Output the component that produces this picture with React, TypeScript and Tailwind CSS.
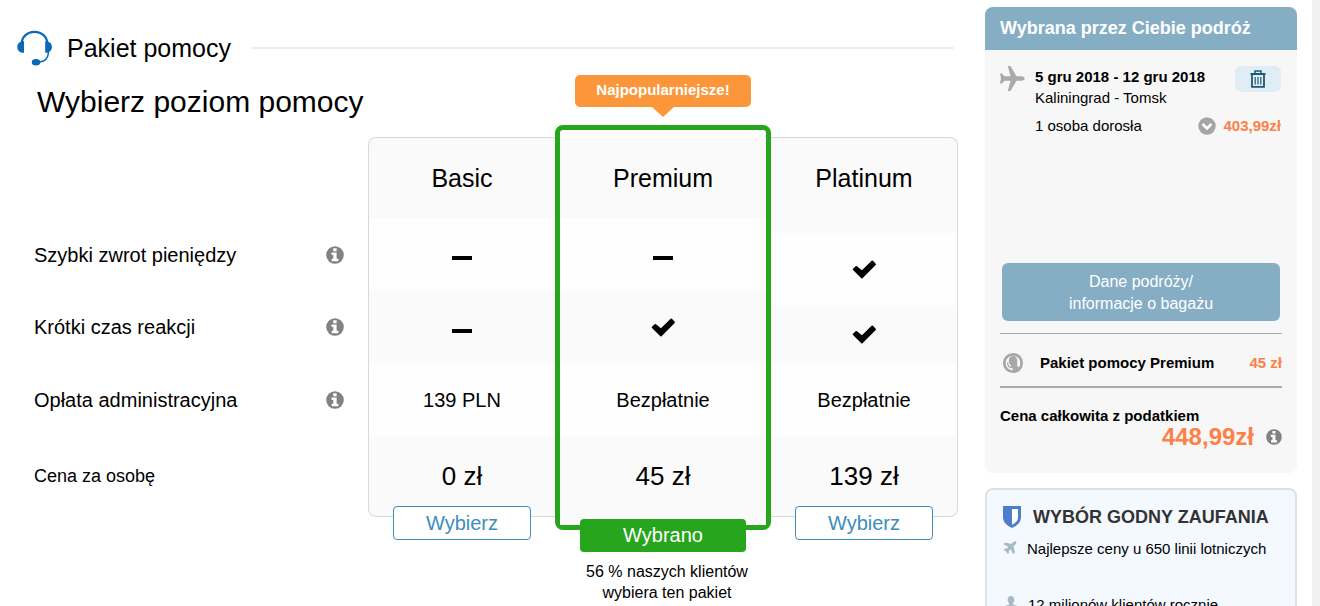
import React from "react";

function HeadsetIcon() {
  return (
    <svg viewBox="0 0 36 36" className="h-9 w-9 shrink-0" aria-hidden="true">
      <path d="M4.5 14C4.8 6.500 10.500 1.900 17.500 1.900S30.200 6.500 30.500 14" fill="none" stroke="#0869b8" strokeWidth="2.200" />
      <path d="M7 11.300v11.500C2.800 22.900.3 20.500.3 17s2.500-5.700 6.700-5.700z" fill="#0869b8" />
      <path d="M28.200 11.300v11.500c4.200.1 6.700-2.300 6.700-5.800s-2.500-5.700-6.700-5.700z" fill="#0869b8" />
      <path d="M31.500 21.500c0 6-3 10.200-10 10.700" fill="none" stroke="#0869b8" strokeWidth="1.500" />
      <ellipse cx="19" cy="32.300" rx="4.200" ry="3.200" fill="#0869b8" />
    </svg>
  );
}

function InfoIcon({ className }: { className: string }) {
  return (
    <svg viewBox="0 0 18 18" className={`block ${className}`} aria-hidden="true">
      <circle cx="9" cy="9" r="8.800" fill="#828282" />
      <path d="M7.200 2.300h3.400v2.900H7.200zM5.500 6.600h5.100v6.100h1.800v2.500H5.700v-2.500h1.600V9H5.500z" fill="#fff" />
    </svg>
  );
}

function PlaneRightIcon() {
  return (
    <svg viewBox="0 0 25 25" className="block h-[25px] w-[25px] shrink-0" aria-hidden="true">
      <path d="M0 7.500h2l2.500 2.800h6L7.800 0h2.700l6 10.300h5c1.800 0 3.200 1.200 3.200 2.200s-1.400 2.200-3.200 2.200h-5l-6 10.300H7.800l2.700-10.300h-6L2 17.500H0l1-5z" fill="#aaa" />
    </svg>
  );
}

function SmallPlaneIcon() {
  return (
    <svg viewBox="0 0 24 24" className="block h-4 w-4 shrink-0 rotate-45" aria-hidden="true">
      <path
        d="M21 16v-2l-8-5V3.500C13 2.670 12.330 2 11.500 2S10 2.670 10 3.500V9l-8 5v2l8-2.500V19l-2 1.500V22l3.500-1 3.500 1v-1.500L13 19v-5.500z"
        fill="#a9bac6"
        stroke="#a9bac6"
        strokeWidth="1.800"
      />
    </svg>
  );
}

function CheckIcon() {
  return (
    <svg viewBox="0 0 24 20" className="mx-auto block h-5 w-6" role="img" aria-label="Tak">
      <path d="M3.600 7.300 1 9.800a1 1 0 0 0 0 1.300l8.300 8.200a1 1 0 0 0 1.200 0L23.700 6a1 1 0 0 0 0-1.300L20.900 1.700a1 1 0 0 0-1.300 0L9.900 11.300 5 7.300a1 1 0 0 0-1.400 0z" fill="#000" />
    </svg>
  );
}

function DashIcon() {
  return (
    <svg viewBox="0 0 20 4" className="mx-auto block h-1 w-5" role="img" aria-label="Nie">
      <path d="M0 0h20v4H0z" fill="#000" />
    </svg>
  );
}

function TrashIcon() {
  return (
    <svg viewBox="0 0 16 18" className="h-[18px] w-4" fill="none" stroke="#1f5878" aria-hidden="true">
      <path d="M0.500 4h15" strokeWidth="2" />
      <path d="M5 3.500V1h6v2.500" strokeWidth="1.500" />
      <path d="M2 4.500V16.800h12V4.500" strokeWidth="1.800" />
      <path d="M5.200 7v7.500M8 7v7.500M10.800 7v7.500" strokeWidth="1.200" />
    </svg>
  );
}

function ChevronBadge() {
  return (
    <svg viewBox="0 0 18 18" className="block h-[18px] w-[18px]" aria-hidden="true">
      <circle cx="9" cy="9" r="8.700" fill="#a5a5a5" />
      <path d="m4.600 7 4.400 4.400L13.400 7" fill="none" stroke="#fff" strokeWidth="2.600" />
    </svg>
  );
}

function AgentIcon() {
  return (
    <svg viewBox="0 0 22 22" className="block h-[22px] w-[22px] shrink-0" aria-hidden="true">
      <circle cx="11" cy="11" r="8.700" fill="#f7f7f7" stroke="#a8a8a8" strokeWidth="2.800" />
      <path d="M6.800 9C6.800 5.500 8.600 4 11 4s4.200 1.500 4.200 5v5l2.300 1.800c-1.600 2.200-3.900 3.400-6.500 3.400v-2.400l-2.200-1.500V13C7.500 12.300 6.800 11 6.800 9z" fill="#a8a8a8" />
      <path d="M5.600 10.500c0 3.500 1.500 5 4.400 5.300" fill="none" stroke="#a8a8a8" strokeWidth="1.200" />
    </svg>
  );
}

function ShieldIcon() {
  return (
    <svg viewBox="0 0 18 22" className="h-[22px] w-[18px] shrink-0" aria-hidden="true">
      <path d="M0 0h18v11c0 5-3.500 8.500-9 11-5.500-2.500-9-6-9-11z" fill="#4e7dcc" />
      <path d="M9 3h6v8c0 3.500-2 5.700-6 7.800z" fill="#fff" />
    </svg>
  );
}

function PersonIcon() {
  return (
    <svg viewBox="0 0 14 18" className="h-[18px] w-3.5 shrink-0" aria-hidden="true">
      <path d="M7 0c2.200 0 3.300 1.600 3.300 3.700 0 1.500-.6 2.900-1.400 3.700v1.200l3.600 1.200c1 .4 1.500 1 1.500 2.200v6H0v-6c0-1.200.5-1.800 1.500-2.200l3.600-1.200V7.400C4.300 6.600 3.700 5.200 3.700 3.700 3.700 1.600 4.800 0 7 0z" fill="#a9bac6" />
    </svg>
  );
}

function RowLabel({ children }: { children: string }) {
  return (
    <div className="flex items-center justify-between pr-6">
      <span>{children}</span>
      <button type="button" aria-label={`Informacje: ${children}`}>
        <InfoIcon className="h-[18px] w-[18px]" />
      </button>
    </div>
  );
}

function ChooseButton() {
  return (
    <button
      type="button"
      className="absolute inset-x-6 -bottom-6 h-[34px] rounded-[4px] border border-[#3d8dbb] bg-white text-[20px] leading-8 text-[#3d8dbb]"
    >
      Wybierz
    </button>
  );
}

const leftEdge = "border-l border-[#d9d9d9]";
const rightEdge = "border-r border-[#d9d9d9]";

function PlansTable() {
  return (
    <div className="relative mt-[17px]">
      <table className="w-full table-fixed border-separate border-spacing-0 text-center text-[20px] leading-6">
        <colgroup>
          <col />
          <col className="w-[187px]" />
          <col className="w-[216px]" />
          <col className="w-[187px]" />
        </colgroup>
        <tbody>
          <tr className="h-[81px] text-[25px]">
            <td />
            <th scope="col" className={`rounded-tl-lg border-t bg-[#fafafa] font-normal ${leftEdge}`}>Basic</th>
            <th scope="col" className="bg-[#fafafa] font-normal">Premium</th>
            <th scope="col" rowSpan={2} className={`rounded-tr-lg border-t bg-[#fafafa] pb-4 font-normal ${rightEdge}`}>Platinum</th>
          </tr>
          <tr className="h-[15px]">
            <th scope="row" rowSpan={2} className="text-left font-normal"><RowLabel>Szybki zwrot pieniędzy</RowLabel></th>
            <td rowSpan={2} className={`bg-[#fefefe] pt-1.5 ${leftEdge}`}><DashIcon /></td>
            <td rowSpan={2} className="bg-[#fefefe] pt-1.5"><DashIcon /></td>
          </tr>
          <tr className="h-[58px]">
            <td rowSpan={2} className={`bg-[#fefefe] ${rightEdge}`}><CheckIcon /></td>
          </tr>
          <tr className="h-[14px]">
            <th scope="row" rowSpan={2} className="text-left font-normal"><RowLabel>Krótki czas reakcji</RowLabel></th>
            <td rowSpan={2} className={`bg-[#fafafa] pt-2 ${leftEdge}`}><DashIcon /></td>
            <td rowSpan={2} className="bg-[#fafafa]"><CheckIcon /></td>
          </tr>
          <tr className="h-[58px]">
            <td className={`bg-[#fafafa] ${rightEdge}`}><CheckIcon /></td>
          </tr>
          <tr className="h-[73px]">
            <th scope="row" className="text-left font-normal"><RowLabel>Opłata administracyjna</RowLabel></th>
            <td className={`bg-[#fefefe] ${leftEdge}`}>139 PLN</td>
            <td className="bg-[#fefefe]">Bezpłatnie</td>
            <td className={`bg-[#fefefe] ${rightEdge}`}>Bezpłatnie</td>
          </tr>
          <tr className="h-[81px] text-[26px]">
            <th scope="row" className="pb-0.5 text-left text-[18px] font-normal">Cena za osobę</th>
            <td className={`relative z-10 rounded-bl-lg border-b bg-[#fafafa] ${leftEdge}`}>0 zł<ChooseButton /></td>
            <td className="bg-[#fafafa] pb-0.5">45 zł</td>
            <td className={`relative z-10 rounded-br-lg border-b bg-[#fafafa] ${rightEdge}`}>139 zł<ChooseButton /></td>
          </tr>
        </tbody>
      </table>

      <div className="pointer-events-none absolute -top-3 right-[187px] -bottom-[13px] z-20 flex w-[216px] flex-col justify-end rounded-lg border-[5px] border-[#27a51c]">
        <div className="h-2 bg-[#fafafa]" />
      </div>

      <div className="absolute right-[187px] bottom-full z-20 flex w-[216px] justify-center pb-[30px]">
        <div className="relative h-8 w-[176px] rounded-[5px] bg-[#fb963a] text-center text-[15px] leading-[30px] font-bold text-white">
          Najpopularniejsze!
          <svg viewBox="0 0 22 10" className="absolute top-full left-1/2 h-2.5 w-[22px] -translate-x-1/2" aria-hidden="true">
            <path d="M0 0h22L11 10z" fill="#fb963a" />
          </svg>
        </div>
      </div>

      <div className="absolute top-full right-[187px] z-30 w-[216px] pt-0.5 text-center text-[16px] leading-[21px]">
        <button type="button" className="mb-[9px] h-[33px] w-[166px] rounded-[4px] bg-[#27a51c] pb-0.5 text-[20px] leading-8 text-white">
          Wybrano
        </button>
        <p className="pr-4 pl-6">56 % naszych klientów wybiera ten pakiet</p>
      </div>
    </div>
  );
}

function TripCard() {
  return (
    <section className="overflow-hidden rounded-lg bg-[#f7f7f7] text-[15px] leading-[21px]">
      <h2 className="bg-[#85aec5] px-[15px] text-[18px] leading-[43px] font-bold text-white">Wybrana przez Ciebie podróż</h2>
      <div className="px-[15px] pt-4 pb-[26px]">
        <div className="flex">
          <PlaneRightIcon />
          <div className="ml-2.5 flex-1">
            <p className="font-bold">5 gru 2018 - 12 gru 2018</p>
            <p>Kaliningrad - Tomsk</p>
          </div>
          <button type="button" aria-label="Usuń" className="mr-px flex h-[26px] w-[46px] items-center justify-center rounded-md bg-[#e0edf4]">
            <TrashIcon />
          </button>
        </div>
        <div className="mt-[7px] flex items-center pr-px pl-[35px]">
          <span className="flex-1">1 osoba dorosła</span>
          <button type="button" aria-label="Szczegóły ceny"><ChevronBadge /></button>
          <span className="ml-[7px] font-bold text-[#fb8149]">403,99zł</span>
        </div>
        <button type="button" className="mx-0.5 mt-[127px] block w-[278px] rounded-md bg-[#85aec5] pt-2 pb-1.5 text-[16px] leading-[22px] text-white">
          Dane podróży/<br />informacje o bagażu
        </button>
        <div className="mt-3 flex h-[55px] items-center border-t border-b-2 border-[#aaa] pt-[5px]">
          <span className="mr-4 ml-0.5"><AgentIcon /></span>
          <span className="flex-1 font-bold">Pakiet pomocy Premium</span>
          <span className="font-bold text-[#fb8149]">45 zł</span>
        </div>
        <p className="mt-[17px] font-bold">Cena całkowita z podatkiem</p>
        <p className="flex items-center justify-end text-[24px] font-bold text-[#fb8149]">
          448,99zł
          <button type="button" aria-label="Informacje o cenie" className="ml-3">
            <InfoIcon className="h-4 w-4" />
          </button>
        </p>
      </div>
    </section>
  );
}

function TrustCard() {
  return (
    <section className="mt-[15px] rounded-lg border-2 border-[#d9e3ea] bg-[#f3f9ff] px-4 pt-[15px] pb-8 text-[15px] leading-5">
      <h2 className="flex items-center text-[18px] leading-6 font-bold text-[#333]">
        <ShieldIcon />
        <span className="ml-3">WYBÓR GODNY ZAUFANIA</span>
      </h2>
      <ul className="mt-2.5">
        <li className="flex h-14">
          <span className="mr-2"><SmallPlaneIcon /></span>
          <span className="whitespace-nowrap">Najlepsze ceny u 650 linii lotniczych</span>
        </li>
        <li className="flex">
          <span className="mr-2.5 ml-px pt-px"><PersonIcon /></span>
          12 milionów klientów rocznie
        </li>
      </ul>
    </section>
  );
}

export default function App() {
  return (
    <div className="flex h-screen overflow-hidden bg-[#f0f0f0] pr-2 font-['Liberation_Sans',Arial,sans-serif] text-black">
      <div className="flex flex-1 bg-white pr-[15px]">
        <main className="flex-1 pt-[30px] pr-[27px]">
          <header className="flex items-center pl-[17px]">
            <HeadsetIcon />
            <h1 className="ml-3.5 text-[25px] leading-9">Pakiet pomocy</h1>
            <hr className="mr-1 ml-5 flex-1 border-t-2 border-[#eee]" />
          </header>
          <div className="pl-[34px]">
            <h2 className="mt-[18px] pl-[3px] text-[30px] leading-9">Wybierz poziom pomocy</h2>
            <PlansTable />
          </div>
        </main>
        <aside className="w-[312px] shrink-0 pt-[7px]">
          <TripCard />
          <TrustCard />
        </aside>
      </div>
    </div>
  );
}
